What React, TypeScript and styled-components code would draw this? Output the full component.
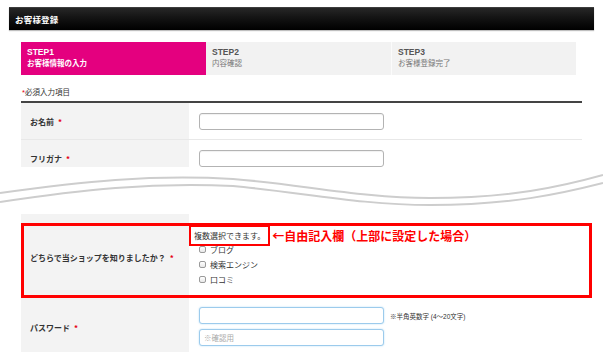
import React from "react"
import styled, { createGlobalStyle } from "styled-components"

const GlobalStyle = createGlobalStyle`
    html, body {
        margin: 0;
        padding: 0;
        background: #fff;
        overflow: hidden;
    }
    body {
        font-family: "Liberation Sans", "Noto Sans CJK JP", sans-serif;
        color: #333;
    }
`

const Page = styled.div`
    width: 603px;
    height: 352px;
    overflow: hidden;
    padding-top: 7px;
    box-sizing: border-box;
`

const Header = styled.div`
    margin: 0 9px;
    height: 23px;
    display: flex;
    align-items: center;
    padding-left: 6px;
    background: linear-gradient(#4a4a4a 0, #262626 6%, #141414 45%, #000 100%);
    box-shadow: 0 1px 1px rgba(0, 0, 0, 0.25);
`

const HeaderTitle = styled.span`
    color: #fff;
    font-size: 8.5px;
    font-weight: 700;
    letter-spacing: 0.2px;
`

const Steps = styled.div`
    margin: 12px 0 0 21px;
    width: 555px;
    height: 33px;
    display: grid;
    grid-template-columns: repeat(3, 1fr);
`

const Step = styled.div<{ $active?: boolean; $divider?: boolean }>`
    background: ${(p) => (p.$active ? "#e4007f" : "#f2f2f2")};
    color: ${(p) => (p.$active ? "#fff" : "#555")};
    border-left: ${(p) => (p.$divider ? "1px solid #fbfbfb" : "none")};
    padding: 5px 0 0 6px;
    display: flex;
    flex-direction: column;
`

const StepNum = styled.span`
    font-size: 8.5px;
    font-weight: 700;
    line-height: 11px;
`

const StepName = styled.span<{ $active?: boolean }>`
    font-size: 7.5px;
    line-height: 11px;
    font-weight: ${(p) => (p.$active ? 700 : 400)};
    color: ${(p) => (p.$active ? "#fff" : "#777")};
`

const RequiredNote = styled.div`
    margin: 13px 0 3px 22px;
    height: 10px;
    font-size: 7.5px;
    line-height: 10px;
    color: #333;
`

const Req = styled.span`
    color: #e60012;
`

const Section = styled.div<{ $clip?: number; $topLine?: boolean }>`
    margin-left: 21px;
    width: 561px;
    height: ${(p) => (p.$clip ? `${p.$clip}px` : "auto")};
    overflow: ${(p) => (p.$clip ? "hidden" : "visible")};
    border-top: ${(p) => (p.$topLine ? "2px solid #444" : "none")};
`

const Row = styled.div<{ $line?: boolean }>`
    position: relative;
    display: grid;
    grid-template-columns: 168px 1fr;
    border-bottom: ${(p) => (p.$line ? "1px solid #e8e8e8" : "none")};
`

const Label = styled.div`
    background: #f3f3f3;
    display: flex;
    align-items: center;
    padding-left: 9px;
    font-size: 8px;
    font-weight: 700;
    color: #333;
    font-family: "Noto Sans CJK JP", sans-serif;
`

const Star = styled.span`
    color: #e60012;
    margin-left: 4px;
    font-weight: 700;
`

const Value = styled.div<{ $pad: string }>`
    padding: ${(p) => p.$pad};
    display: flex;
    flex-direction: column;
    align-items: flex-start;
`

const FieldLine = styled.div<{ $gapTop?: number }>`
    display: flex;
    align-items: center;
    gap: 6px;
    margin-top: ${(p) => p.$gapTop ?? 0}px;
`

const TextInput = styled.input<{ $focus?: boolean }>`
    width: 185px;
    height: 17px;
    box-sizing: border-box;
    border: 1px solid ${(p) => (p.$focus ? "#9ccbec" : "#b3b3b3")};
    border-radius: 3px;
    box-shadow: ${(p) =>
        p.$focus ? "0 0 2px #b5dcf5" : "inset 0 1px 1px rgba(0,0,0,0.06)"};
    background: #fff;
    padding: 0 4px;
    font-size: 7.5px;
    font-family: "Noto Sans CJK JP", sans-serif;
    outline: none;
    &::placeholder {
        color: #aaa;
    }
`

const SmallNote = styled.span`
    font-size: 6.5px;
    color: #333;
    font-family: "Liberation Sans", "Noto Sans CJK JP", sans-serif;
`

const WaveBreak = styled.div`
    height: 47px;
    width: 603px;
    svg {
        display: block;
    }
`

const Highlight = styled.div`
    position: absolute;
    left: 0;
    top: 9px;
    width: 571px;
    height: 75px;
    box-sizing: border-box;
    border: 3px solid #f00;
    pointer-events: none;
`

const NoteLine = styled.div`
    display: flex;
    align-items: center;
    height: 19px;
    margin-left: -10px;
`

const NoteBox = styled.span`
    border: 2px solid #f00;
    padding: 0 3px;
    height: 21px;
    box-sizing: border-box;
    display: flex;
    align-items: center;
    font-size: 8px;
    color: #333;
    font-family: "Noto Sans CJK JP", sans-serif;
`

const Callout = styled.span`
    margin-left: 2px;
    color: #f00;
    font-size: 12px;
    font-weight: 700;
    font-family: "Noto Sans CJK JP", sans-serif;
`

const CheckList = styled.div`
    margin-top: -3px;
    padding-bottom: 3px;
`

const CheckItem = styled.label`
    display: flex;
    align-items: center;
    gap: 4px;
    height: 15px;
    font-size: 8px;
    color: #333;
    font-family: "Noto Sans CJK JP", sans-serif;
`

const Box = styled.span`
    width: 7px;
    height: 7px;
    box-sizing: border-box;
    border: 1px solid #9a9a9a;
    border-radius: 2px;
    background: linear-gradient(#fff, #e8e8e8);
`

const Wave: React.FC = () => (
    <svg width="603" height="47" viewBox="0 0 603 47">
        <g fill="none" stroke="#cdcdcd" strokeWidth="2">
            <path d="M0 26 C 80 15 150 7 233 12 C 300 17 360 31 430 31 C 510 31 560 20 603 8" />
            <path d="M0 35 C 80 23 150 15 233 19 C 300 25 360 38 430 38 C 510 38 560 27 603 16" />
        </g>
    </svg>
)

const App: React.FC = () => {
    const sources = ["ブログ", "検索エンジン", "口コミ"]
    return (
        <>
            <GlobalStyle />
            <Page>
                <Header>
                    <HeaderTitle>お客様登録</HeaderTitle>
                </Header>
                <Steps>
                    <Step $active>
                        <StepNum>STEP1</StepNum>
                        <StepName $active>お客様情報の入力</StepName>
                    </Step>
                    <Step>
                        <StepNum>STEP2</StepNum>
                        <StepName>内容確認</StepName>
                    </Step>
                    <Step $divider>
                        <StepNum>STEP3</StepNum>
                        <StepName>お客様登録完了</StepName>
                    </Step>
                </Steps>
                <RequiredNote>
                    <Req>*</Req>必須入力項目
                </RequiredNote>

                <Section $clip={64} $topLine>
                    <Row $line>
                        <Label>
                            お名前<Star>*</Star>
                        </Label>
                        <Value $pad="10px 0 9px 10px">
                            <TextInput />
                        </Value>
                    </Row>
                    <Row $line>
                        <Label>
                            フリガナ<Star>*</Star>
                        </Label>
                        <Value $pad="10px 0 9px 10px">
                            <TextInput />
                        </Value>
                    </Row>
                </Section>

                <WaveBreak>
                    <Wave />
                </WaveBreak>

                <Section>
                    <Row>
                        <Label>
                            どちらで当ショップを知りましたか？<Star>*</Star>
                        </Label>
                        <Value $pad="12px 0 10px 10px">
                            <NoteLine>
                                <NoteBox>複数選択できます。</NoteBox>
                                <Callout>←自由記入欄（上部に設定した場合）</Callout>
                            </NoteLine>
                            <CheckList>
                                {sources.map((s) => (
                                    <CheckItem key={s}>
                                        <Box />
                                        {s}
                                    </CheckItem>
                                ))}
                            </CheckList>
                        </Value>
                        <Highlight />
                    </Row>
                    <Row>
                        <Label>
                            パスワード<Star>*</Star>
                        </Label>
                        <Value $pad="7px 0 8px 10px">
                            <FieldLine>
                                <TextInput $focus />
                                <SmallNote>※半角英数字 (4～20文字)</SmallNote>
                            </FieldLine>
                            <FieldLine $gapTop={5}>
                                <TextInput $focus placeholder="※確認用" />
                            </FieldLine>
                        </Value>
                    </Row>
                </Section>
            </Page>
        </>
    )
}

export default App
